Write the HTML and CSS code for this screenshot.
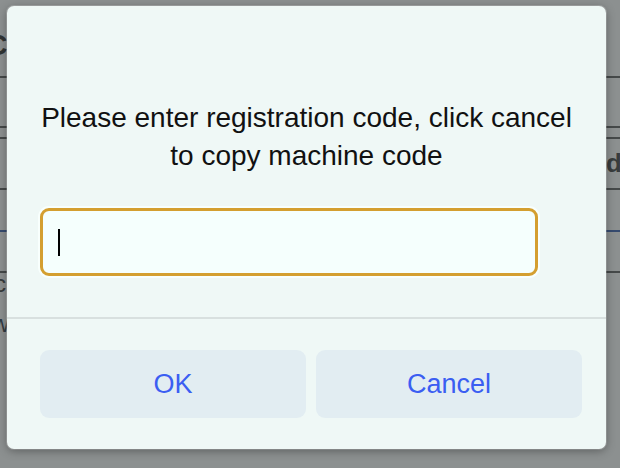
FILE: index.html
```html
<!DOCTYPE html>
<html>
<head>
<meta charset="utf-8">
<link rel="stylesheet" href="styles.css">
</head>
<body>
<div class="page">
  <span class="ch big">C</span>
  <div class="line l77"></div>
  <div class="line l127"></div>
  <div class="line l138"></div>
  <div class="line l189"></div>
  <div class="line blue l231"></div>
  <div class="line l272"></div>
  <span class="ch bold dchar">d</span>
  <span class="ch cchar">c</span>
  <span class="ch wchar">w</span>
</div>
<div class="overlay"></div>
<div class="dialog">
  <div class="body">
    <p class="msg">Please enter registration code, click cancel<br>to copy machine code</p>
    <div class="field"><span class="caret"></span></div>
  </div>
  <div class="footer">
    <button class="btn">OK</button>
    <button class="btn">Cancel</button>
  </div>
</div>
</body>
</html>
```

FILE: styles.css
```css
html, body {
  margin: 0;
  padding: 0;
  width: 620px;
  height: 468px;
  overflow: hidden;
  font-family: "Liberation Sans", Arial, sans-serif;
}
.page {
  position: relative;
  width: 620px;
  height: 468px;
  background: #ffffff;
}
.line {
  position: absolute;
  left: 0;
  right: 0;
  height: 2px;
  background: #444;
}
.line.blue { background: #1f4aa8; }
.l77 { top: 76px; }
.l127 { top: 126px; }
.l138 { top: 137px; }
.l189 { top: 188px; }
.l231 { top: 230px; }
.l272 { top: 271px; }
.ch {
  position: absolute;
  color: #111;
  font-size: 26px;
  line-height: 1;
}
.big { left: -14px; top: 30px; font-size: 30px; font-weight: bold; }
.bold { font-weight: bold; }
.dchar { left: 606px; top: 150px; font-size: 26px; color: #222; }
.cchar { left: -6px; top: 272px; font-size: 24px; color: #222; }
.wchar { left: -8px; top: 312px; font-size: 24px; color: #123; }
.overlay {
  position: absolute;
  inset: 0;
  background: rgba(70, 76, 76, 0.62);
}
.dialog {
  position: absolute;
  left: 7px;
  top: 6px;
  width: 599px;
  height: 443px;
  background: #eff8f6;
  border-radius: 7px;
  box-shadow: 0 2px 10px rgba(0,0,0,0.35), 0 0 0 1px rgba(255,255,255,0.25);
  display: flex;
  flex-direction: column;
}
.body {
  padding: 93px 0 0 33px;
  height: 313px;
  box-sizing: border-box;
  border-bottom: 2px solid #d8e0df;
}
.msg {
  margin: 0 0 0 -33px;
  text-align: center;
  font-size: 28px;
  line-height: 38px;
  color: #111;
}
.field {
  margin-top: 33px;
  width: 498px;
  height: 68px;
  box-sizing: border-box;
  border: 3px solid #d49f30;
  border-radius: 9px;
  background: #f5fffd;
  box-shadow: 0 0 0 2px #f8fffd;
  display: flex;
  align-items: center;
  padding-left: 15px;
}
.caret {
  width: 2px;
  height: 27px;
  background: #000;
}
.footer {
  display: flex;
  gap: 10px;
  padding: 31px 24px 0 33px;
}
.btn {
  flex: 1;
  height: 68px;
  border: none;
  border-radius: 9px;
  background: #e2edf2;
  color: #3b5ef2;
  font-family: "Liberation Sans Narrow", "Liberation Sans", Arial, sans-serif;
  font-stretch: condensed;
  font-size: 27px;
  padding: 0;
}
```
